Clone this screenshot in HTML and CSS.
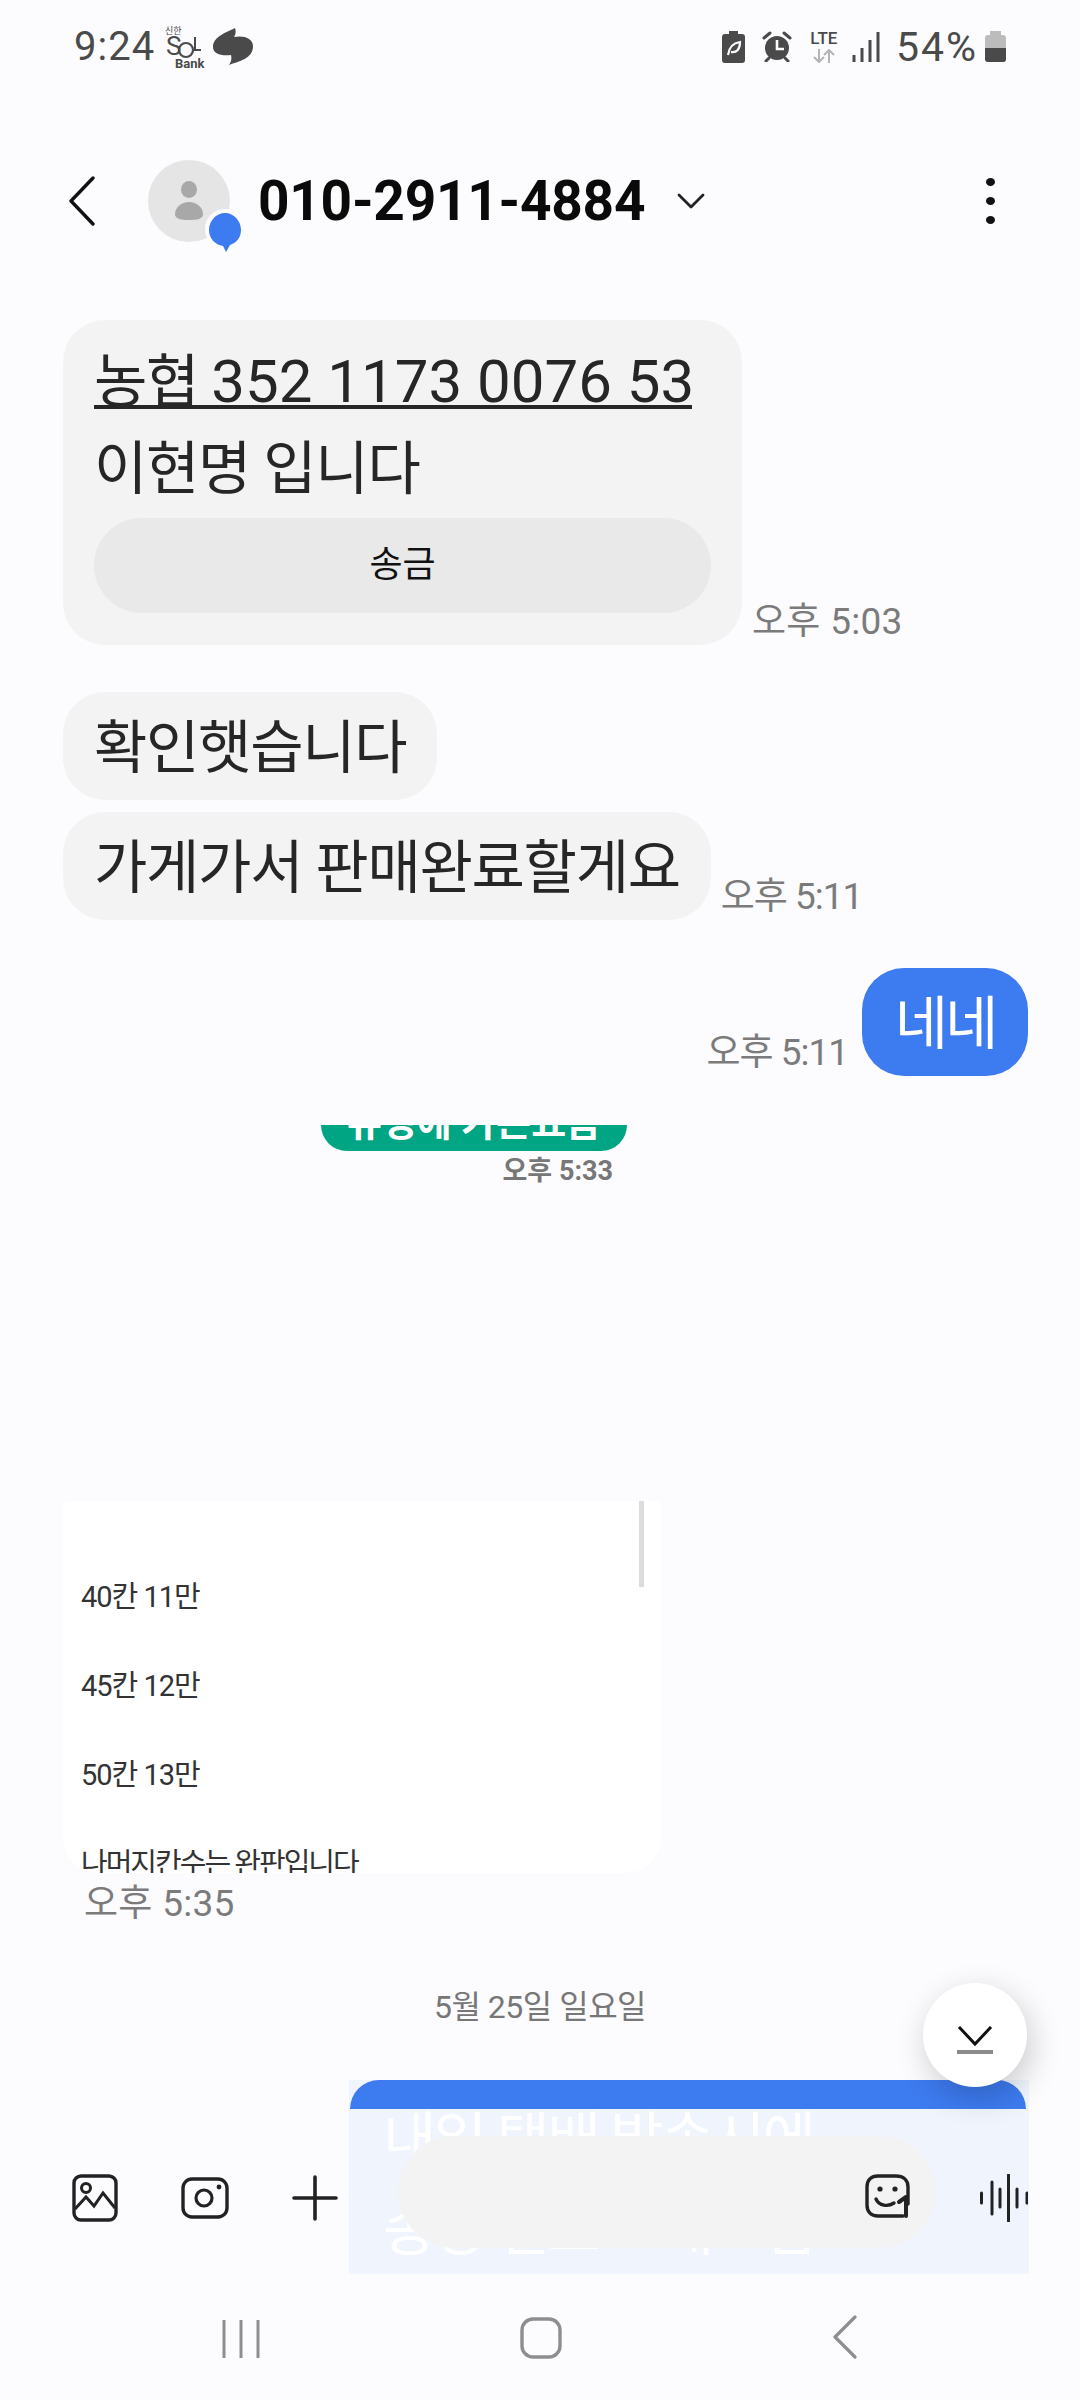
FILE: index.html
```html
<!DOCTYPE html>
<html lang="ko">
<head>
    <meta charset="UTF-8">
    <meta name="viewport" content="width=device-width, initial-scale=1.0">
    <title>010-2911-4884</title>
    <link rel="stylesheet" href="styles.css">
</head>
<body>
    <div class="screen">
        <div class="status-bar">
            <div class="status-left">
                <span class="clock">9:24</span>
                <svg class="sol-logo" width="42" height="46" viewBox="0 0 42 46">
                    <text x="1" y="9" font-size="9" font-family="Noto Sans CJK KR" fill="#4a4a4a">신한</text>
                    <text x="2" y="30" font-size="26" font-family="Roboto" fill="#4a4a4a">S</text>
                    <circle cx="22" cy="25" r="7" fill="none" stroke="#4a4a4a" stroke-width="2.2"/>
                    <path d="M31 12v13h6" fill="none" stroke="#4a4a4a" stroke-width="2"/>
                    <text x="11" y="43" font-size="13" font-weight="700" font-family="Roboto" fill="#4a4a4a">Bank</text>
                </svg>
                <svg class="talk-blob" width="40" height="37" viewBox="0 0 40 37">
                    <path d="M22 0C15 4 0 8 0 19C0 26 8 28 18 27C19 31 18 34 16 37C26 33 40 31 40 18C40 10 30 7 21 9C23 6 23 3 22 0Z" fill="#4a4a4a"/>
                </svg>
            </div>
            <div class="status-right">
                <svg width="23" height="32" viewBox="0 0 23 32">
                    <path d="M7 0h9v3h4a3 3 0 0 1 3 3v23a3 3 0 0 1-3 3H3a3 3 0 0 1-3-3V6a3 3 0 0 1 3-3h4Z" fill="#4a4a4a"/>
                    <path d="M6 24C7 16 11 12 18 11C18 18 15 22 9 21" fill="none" stroke="#fcfcfe" stroke-width="2.2"/>
                </svg>
                <svg class="alarm" width="30" height="31" viewBox="0 0 30 31">
                    <circle cx="15" cy="17" r="12" fill="#4a4a4a"/>
                    <path d="M2 7 8 2M28 7 22 2M7 27 4 30M23 27 26 30" stroke="#4a4a4a" stroke-width="3" stroke-linecap="round"/>
                    <path d="M15 9v9h7" fill="none" stroke="#fcfcfe" stroke-width="2.6"/>
                </svg>
                <div class="lte">
                    <span class="lte-label">LTE</span>
                    <svg width="22" height="14" viewBox="0 0 22 14">
                        <path d="M6 0v12M1 8l5 5 5-5" fill="none" stroke="#b5b5b5" stroke-width="2"/>
                        <path d="M16 14V2M11 6l5-5 5 5" fill="none" stroke="#b5b5b5" stroke-width="2"/>
                    </svg>
                </div>
                <svg class="signal" width="28" height="30" viewBox="0 0 28 30">
                    <path d="M2 23v7M10 16v14M18 8v22M26 0v30" stroke="#4a4a4a" stroke-width="3"/>
                </svg>
                <span class="battery-pct">54%</span>
                <div class="battery">
                    <div class="battery-cap"></div>
                    <div class="battery-body"><div class="battery-level"></div></div>
                </div>
            </div>
        </div>

        <div class="app-header">
            <svg class="back" width="28" height="50" viewBox="0 0 28 50">
                <path d="M25 2 3 25l22 23" fill="none" stroke="#111" stroke-width="3.4" stroke-linecap="round" stroke-linejoin="round"/>
            </svg>
            <div class="avatar">
                <svg width="28" height="40" viewBox="0 0 28 40">
                    <ellipse cx="14" cy="8.500" rx="8" ry="8.500" fill="#a8a8a8"/>
                    <path d="M14 21C22 21 28 27 28 33C28 38 22 39 14 39C6 39 0 38 0 33C0 27 6 21 14 21Z" fill="#a8a8a8"/>
                </svg>
                <svg class="avatar-badge" width="40" height="44" viewBox="0 0 40 44">
                    <circle cx="20" cy="20" r="20" fill="#fcfcfe"/>
                    <path d="M20 4C29 4 36 12 36 21C36 29 31 34 25 36L21 43L18 37C10 36 4 29 4 21C4 12 11 4 20 4Z" fill="#3d7bf0"/>
                </svg>
            </div>
            <span class="contact">010-2911-4884</span>
            <svg class="caret" width="28" height="16" viewBox="0 0 28 16">
                <path d="M2 2l12 12L26 2" fill="none" stroke="#222" stroke-width="2.8" stroke-linecap="round" stroke-linejoin="round"/>
            </svg>
            <div class="more"><i></i><i></i><i></i></div>
        </div>

        <div class="thread">
            <div class="row row-account">
                <div class="bubble">
                    <a class="account">농협 <span class="account-num">352 1173 0076 53</span></a>
                    <div class="account-name">이현명 입니다</div>
                    <div class="send-btn">송금</div>
                </div>
                <span class="time">오후 5:03</span>
            </div>

            <div class="row row-check"><div class="bubble">확인햇습니다</div></div>
            <div class="row row-shop">
                <div class="bubble">가게가서 판매완료할게요</div>
                <span class="time time-ones">오후 5:11</span>
            </div>

            <div class="row row-sent">
                <span class="time time-ones">오후 5:11</span>
                <div class="bubble bubble-sent">네네</div>
            </div>

            <div class="green-wrap">
                <div class="green-bubble"><span>유성에 가는요금</span></div>
                <span class="green-time">오후 5:33</span>
            </div>

            <div class="card">
                <div class="card-scroll"></div>
                <p>40칸 11만</p>
                <p>45칸 12만</p>
                <p>50칸 13만</p>
                <p class="card-last">나머지칸수는 완판입니다</p>
            </div>
            <span class="time card-time">오후 5:35</span>

            <div class="date">5월 25일 일요일</div>

            <div class="sent-faded">
                <div class="sent-top"></div>
                <div class="sent-lines">
                    <p>내일 택배 발송시에</p>
                    <p>송장 번호 보내드림</p>
                </div>
            </div>
        </div>

        <div class="nav-bar">
            <svg width="38" height="40" viewBox="0 0 38 40">
                <path d="M2 1v38M19 1v38M36 1v38" stroke="#8e8e8e" stroke-width="3"/>
            </svg>
            <svg class="nav-home" width="42" height="42" viewBox="0 0 42 42">
                <rect x="2" y="2" width="38" height="38" rx="11" fill="none" stroke="#8e8e8e" stroke-width="3.4"/>
            </svg>
            <svg width="26" height="44" viewBox="0 0 26 44">
                <path d="M23 2 3 22l20 20" fill="none" stroke="#8e8e8e" stroke-width="3.2" stroke-linecap="round" stroke-linejoin="round"/>
            </svg>
        </div>

        <button class="scroll-down">
            <svg width="38" height="28" viewBox="0 0 38 28">
                <path d="M3 1l16 17L35 1" fill="none" stroke="#111" stroke-width="3"/>
                <path d="M1 26h36" stroke="#8b8b8b" stroke-width="4"/>
            </svg>
        </button>

        <div class="composer">
            <svg class="icon-gallery" width="46" height="48" viewBox="0 0 46 48">
                <rect x="2" y="2" width="42" height="44" rx="7" fill="none" stroke="#222" stroke-width="3.4"/>
                <circle cx="14" cy="14" r="4.500" fill="none" stroke="#222" stroke-width="3"/>
                <path d="M3 35 14 23l8 9 9-13 12 15" fill="none" stroke="#222" stroke-width="3"/>
            </svg>
            <svg class="icon-camera" width="48" height="42" viewBox="0 0 48 42">
                <rect x="2" y="2" width="44" height="38" rx="9" fill="none" stroke="#222" stroke-width="3.4"/>
                <circle cx="23" cy="21" r="8" fill="none" stroke="#222" stroke-width="3.2"/>
                <circle cx="38" cy="10" r="2.400" fill="#222"/>
            </svg>
            <svg class="icon-plus" width="46" height="46" viewBox="0 0 46 46">
                <path d="M23 2v42M2 23h42" stroke="#222" stroke-width="3.6" stroke-linecap="round"/>
            </svg>
            <div class="input-pill">
                <svg width="46" height="44" viewBox="0 0 46 44">
                    <path d="M38 42H13C6 42 2 38 2 31V13C2 6 6 2 13 2H31C38 2 43 6 43 13V30" fill="none" stroke="#222" stroke-width="3.4" stroke-linecap="round"/>
                    <circle cx="15" cy="15" r="2.600" fill="#222"/>
                    <circle cx="30" cy="15" r="2.600" fill="#222"/>
                    <path d="M11 25C14 32 23 33 29 29" fill="none" stroke="#222" stroke-width="3.4" stroke-linecap="round"/>
                    <path d="M34 28l7-5v19" fill="none" stroke="#222" stroke-width="4" stroke-linecap="round" stroke-linejoin="round"/>
                </svg>
            </div>
            <svg class="icon-voice" width="48" height="48" viewBox="0 0 48 48">
                <path d="M1.500 19v10M12 8v32M20 15v18M28.500 1v46M37 15v18M47 19v10" stroke="#222" stroke-width="3" stroke-linecap="round"/>
            </svg>
        </div>
    </div>
</body>
</html>
```

FILE: styles.css
```css
* {
    box-sizing: border-box;
}
body {
    margin: 0;
    font-family: Roboto, "Noto Sans CJK KR", sans-serif;
}
p {
    margin: 0;
}
.screen {
    position: relative;
    width: 1080px;
    height: 2400px;
    overflow: hidden;
    background-color: #fcfcfe;
    display: flex;
    flex-direction: column;
}

/* status bar */
.status-bar {
    height: 90px;
    flex-shrink: 0;
    padding: 24px 74px 0 74px;
    display: flex;
    justify-content: space-between;
    align-items: flex-start;
    color: #4a4a4a;
}
.status-left {
    display: flex;
    align-items: flex-start;
    gap: 7px;
}
.status-left .sol-logo {
    margin-top: 1px;
    margin-left: 2px;
}
.status-left .talk-blob {
    margin-top: 4px;
}
.clock {
    font-size: 40px;
    line-height: 46px;
    letter-spacing: 1px;
}
.status-right {
    display: flex;
    align-items: flex-start;
    padding-top: 7px;
}
.alarm {
    margin-left: 17px;
}
.lte {
    margin-left: 17px;
    width: 30px;
    display: flex;
    flex-direction: column;
    align-items: center;
    gap: 3px;
}
.lte-label {
    font-size: 17px;
    line-height: 15px;
    font-weight: 500;
}
.signal {
    margin-left: 13px;
    margin-top: 1px;
}
.battery-pct {
    margin-left: 16px;
    font-size: 41px;
    line-height: 32px;
    letter-spacing: 2px;
}
.battery {
    margin-left: 7px;
    width: 21px;
}
.battery-cap {
    width: 11px;
    height: 4px;
    margin: 0 auto;
    background-color: #bcbcbc;
}
.battery-body {
    height: 27px;
    border-radius: 3px;
    background-color: #bcbcbc;
    overflow: hidden;
    display: flex;
    align-items: flex-end;
}
.battery-level {
    width: 100%;
    height: 14px;
    background-color: #4a4a4a;
}

/* header */
.app-header {
    height: 110px;
    flex-shrink: 0;
    margin-top: 56px;
    display: flex;
    align-items: center;
    padding-left: 68px;
}
.avatar {
    position: relative;
    width: 82px;
    height: 82px;
    margin-left: 52px;
    border-radius: 50%;
    background-color: #e5e5e5;
    display: flex;
    align-items: center;
    justify-content: center;
}
.avatar-badge {
    position: absolute;
    right: -15px;
    top: 49px;
}
.contact {
    margin-left: 28px;
    font-size: 55px;
    font-weight: 700;
    color: #0a0a0a;
    letter-spacing: -0.25px;
}
.caret {
    margin-left: 32px;
}
.more {
    margin-left: auto;
    margin-right: 85px;
    display: flex;
    flex-direction: column;
    gap: 11px;
}
.more i {
    display: block;
    width: 9px;
    height: 8px;
    border-radius: 50%;
    background-color: #111;
}

/* message list */
.thread {
    flex: 1;
    min-height: 0;
    padding-top: 64px;
    display: flex;
    flex-direction: column;
    font-size: 58px;
    color: #262626;
}
.row {
    flex-shrink: 0;
    display: flex;
    align-items: flex-end;
    gap: 10px;
    padding: 0 52px 0 63px;
}
.bubble {
    padding: 16px 31px 12px;
    border-radius: 42px;
    line-height: 80px;
    letter-spacing: -1.3px;
    background-color: #f3f3f3;
    white-space: nowrap;
}
.row-account .bubble {
    width: 679px;
    height: 325px;
    padding-top: 13px;
}
.account {
    display: block;
    width: 598px;
    height: 76px;
    margin-bottom: 17px;
    line-height: 97px;
    border-bottom: 4px solid #262626;
}
.account-num {
    font-size: 60px;
    letter-spacing: 0;
}
.account-name {
    line-height: 87px;
}
.send-btn {
    width: 617px;
    height: 95px;
    margin-top: 5px;
    border-radius: 48px;
    background-color: #e9e9e9;
    color: #111;
    font-size: 36px;
    letter-spacing: 0;
    line-height: 95px;
    text-align: center;
}
.time {
    font-size: 37px;
    line-height: 44px;
    color: #7b7b7b;
    margin-bottom: 1px;
    letter-spacing: 0.3px;
    white-space: nowrap;
}
.time-ones {
    letter-spacing: -1px;
}
.row-check {
    margin-top: 47px;
}
.row-shop {
    margin-top: 12px;
}
.row-sent {
    margin-top: 48px;
    justify-content: flex-end;
    gap: 14px;
}
.bubble-sent {
    width: 166px;
    padding-left: 0;
    padding-right: 0;
    background-color: #3d7bf0;
    color: #fff;
    letter-spacing: -3px;
    text-align: center;
}

/* pasted leftovers of other messages */
.green-wrap {
    flex-shrink: 0;
    margin-top: 49px;
    margin-left: 321px;
    width: 306px;
    display: flex;
    flex-direction: column;
    align-items: flex-end;
}
.green-bubble {
    width: 306px;
    height: 26px;
    overflow: hidden;
    border-radius: 0 0 26px 26px;
    background-color: #00a583;
    color: #fff;
    font-size: 38px;
    font-weight: 700;
    text-align: center;
    white-space: nowrap;
}
.green-bubble span {
    display: block;
    line-height: 40px;
    margin-top: -22px;
}
.green-time {
    margin-top: 4px;
    margin-right: 14px;
    font-size: 27px;
    font-weight: 700;
    line-height: 32px;
    color: #777;
}
.card {
    position: relative;
    flex-shrink: 0;
    width: 598px;
    height: 372px;
    margin-top: 314px;
    margin-left: 63px;
    padding: 52px 18px 0;
    overflow: hidden;
    border-radius: 6px 6px 36px 36px;
    background-color: #fff;
    font-size: 29px;
    letter-spacing: -1px;
    color: #333;
}
.card p {
    line-height: 89px;
}
.card .card-last {
    letter-spacing: -2px;
}
.card-scroll {
    position: absolute;
    top: 0;
    right: 17px;
    width: 5px;
    height: 86px;
    background-color: #dcdcdc;
}
.card-time {
    margin: 9px 0 0 84px;
}
.date {
    margin-top: 59px;
    text-align: center;
    font-size: 32px;
    line-height: 44px;
    letter-spacing: -0.5px;
    color: #777;
}
.sent-faded {
    flex-shrink: 0;
    width: 680px;
    height: 194px;
    margin-top: 51px;
    margin-left: 349px;
    background-color: #eff4fd;
    overflow: hidden;
    color: #fff;
    letter-spacing: -2.5px;
}
.sent-top {
    height: 29px;
    margin: 0 3px 0 1px;
    border-radius: 42px 42px 0 0;
    background-color: #3d7bf0;
}
.sent-lines {
    padding-left: 34px;
    margin-top: -14px;
    white-space: nowrap;
}
.sent-lines p {
    line-height: 90px;
}

/* nav */
.nav-bar {
    height: 130px;
    flex-shrink: 0;
    padding: 0 222px 41px 222px;
    display: flex;
    align-items: flex-end;
    justify-content: space-between;
}
.nav-home {
    margin-right: 10px;
}

/* floating over the list */
.scroll-down {
    position: absolute;
    left: 923px;
    top: 1983px;
    width: 104px;
    height: 104px;
    padding: 12px 0 0;
    border: none;
    border-radius: 50%;
    background-color: #fff;
    box-shadow: 4px 10px 32px rgba(0, 0, 0, 0.2);
}
.composer {
    position: absolute;
    left: 72px;
    top: 2136px;
    width: 956px;
    height: 112px;
    display: flex;
    align-items: center;
}
.composer > svg {
    margin-top: 12px;
}
.icon-camera {
    margin-left: 63px;
}
.icon-plus {
    margin-left: 63px;
}
.input-pill {
    width: 538px;
    height: 112px;
    margin-left: 60px;
    padding: 8px 25px 0 0;
    border-radius: 56px;
    background-color: #f3f3f3;
    display: flex;
    align-items: center;
    justify-content: flex-end;
}
.icon-voice {
    margin-left: auto;
}
```
